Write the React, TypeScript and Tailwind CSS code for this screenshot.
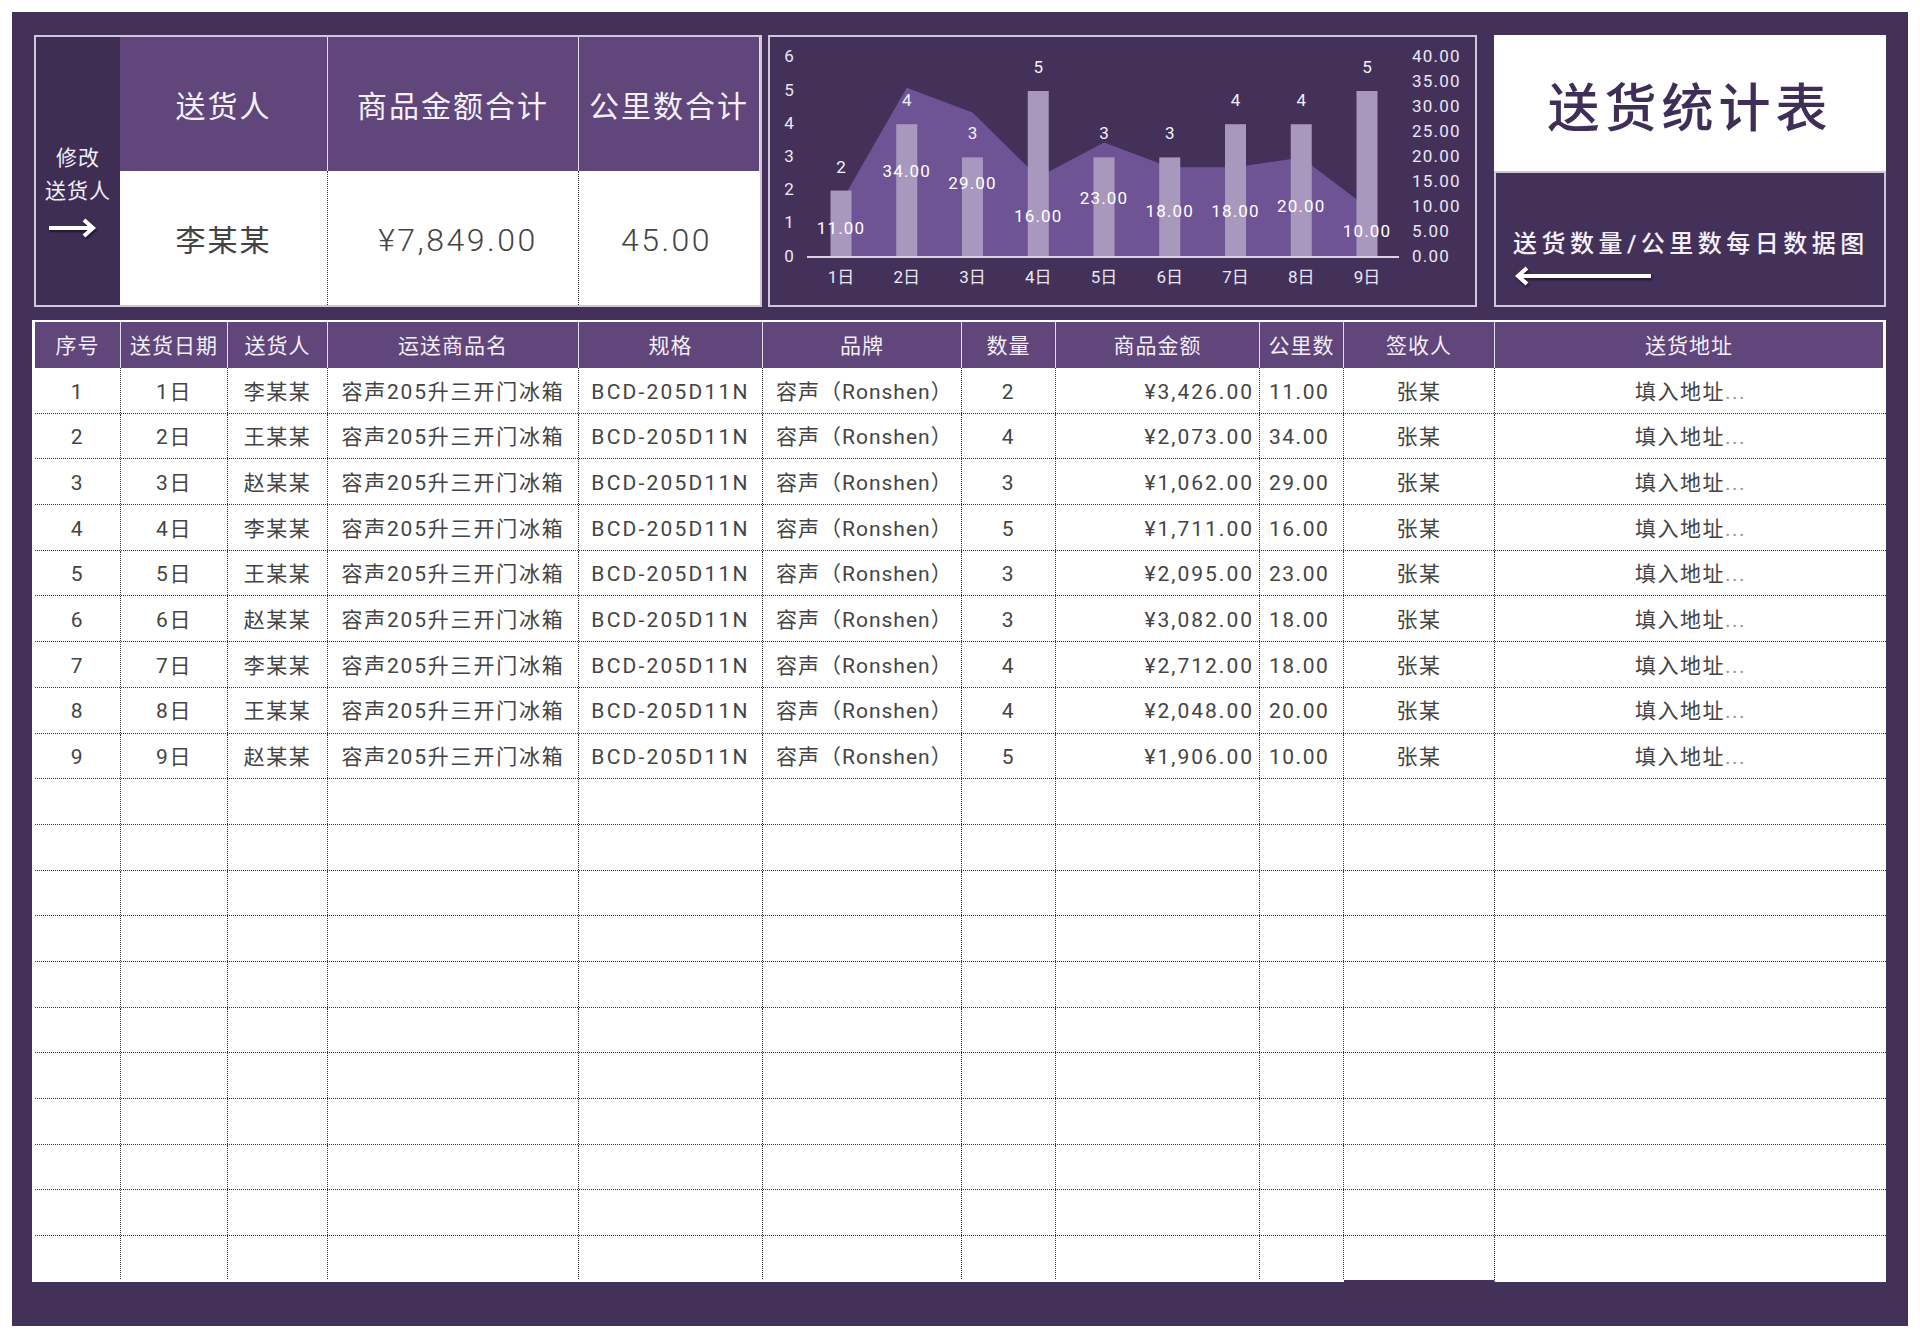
const rows = [
    ['1', '1日', '李某某', '¥3,426.00', '2', '11.00'],
    ['2', '2日', '王某某', '¥2,073.00', '4', '34.00'],
    ['3', '3日', '赵某某', '¥1,062.00', '3', '29.00'],
    ['4', '4日', '李某某', '¥1,711.00', '5', '16.00'],
    ['5', '5日', '王某某', '¥2,095.00', '3', '23.00'],
    ['6', '6日', '赵某某', '¥3,082.00', '3', '18.00'],
    ['7', '7日', '李某某', '¥2,712.00', '4', '18.00'],
    ['8', '8日', '王某某', '¥2,048.00', '4', '20.00'],
    ['9', '9日', '赵某某', '¥1,906.00', '5', '10.00'],
];

const headers = ['序号', '送货日期', '送货人', '运送商品名', '规格', '品牌', '数量', '商品金额', '公里数', '签收人', '送货地址'];
const cols = 'grid grid-cols-[86px_107px_100px_251px_184px_199px_94px_204px_84px_151px_388px]';
const cell = 'flex items-center justify-center border-r border-dotted border-[#333] pt-[4px]';

// chart coordinates are relative to the inside of the chart frame
const qty = [2, 4, 3, 5, 3, 3, 4, 4, 5];
const km = [11, 34, 29, 16, 23, 18, 18, 20, 10];
const barX = (i: number) => 71 + 65.75 * i;
const base = 220;
const qtyY = (v: number) => base - v * 33.2;
const kmY = (v: number) => base - v * 4.98;

function Chart() {
    const area = `${barX(0)},${base} ` + km.map((v, i) => `${barX(i)},${kmY(v)}`).join(' ') + ` ${barX(8)},${base}`;
    return (
        <svg viewBox="0 0 705 268" className="block h-full w-full font-['Roboto','Noto_Sans_CJK_SC',sans-serif]">
            <polygon points={area} fill="#6f5495" />
            {qty.map((v, i) => (
                <rect key={i} x={barX(i) - 10.5} y={qtyY(v)} width={21} height={base - qtyY(v)} fill="#a898be" />
            ))}
            <line x1={37} y1={base} x2={629} y2={base} stroke="#d9d2e2" strokeWidth={2} />
            {[0, 1, 2, 3, 4, 5, 6].map((v) => (
                <text key={v} x={19} y={base + 4.5 - v * 33.2} textAnchor="middle" fontSize={17} fill="#ece6f2">{v}</text>
            ))}
            {['0.00', '5.00', '10.00', '15.00', '20.00', '25.00', '30.00', '35.00', '40.00'].map((t, i) => (
                <text key={t} x={642} y={base + 4.5 - i * 24.9} fontSize={17} letterSpacing={1.2} fill="#ece6f2">{t}</text>
            ))}
            {qty.map((v, i) => (
                <text key={i} x={barX(i)} y={qtyY(v) - 18} textAnchor="middle" fontSize={17} fill="#f4f0f8">{v}</text>
            ))}
            {km.map((v, i) => (
                <text key={i} x={barX(i)} y={(base + kmY(v)) / 2 + 4.5} textAnchor="middle" fontSize={17} letterSpacing={1.2} fill="#ffffff">{v.toFixed(2)}</text>
            ))}
            {qty.map((_, i) => (
                <text key={i} x={barX(i)} y={246} textAnchor="middle" fontSize={17} fill="#ece6f2">{i + 1}日</text>
            ))}
        </svg>
    );
}

function Row({ data, last }: { data?: string[]; last?: boolean }) {
    return (
        <div className={`${cols} h-[45.7px] text-[21px] tracking-[1.5px] text-[#444] ${last ? 'pb-[3px]' : 'border-b border-dotted border-[#333]'}`}>
            <div className={cell}>{data?.[0]}</div>
            <div className={cell}>{data?.[1]}</div>
            <div className={cell}>{data?.[2]}</div>
            <div className={`${cell} tracking-[1.8px]`}>{data && '容声205升三开门冰箱'}</div>
            <div className={`${cell} tracking-[2.2px]`}>{data && 'BCD-205D11N'}</div>
            <div className={`${cell} !justify-start pl-[13px] tracking-[1px]`}>{data && '容声（Ronshen）'}</div>
            <div className={cell}>{data?.[4]}</div>
            <div className={`${cell} !justify-end pr-[5px] tracking-[2px]`}>{data?.[3]}</div>
            <div className={`${cell} !justify-start pl-[9px]`}>{data?.[5]}</div>
            <div className={`${cell} ${last ? 'mb-[-3px] border-b-2 border-b-[#43315a] [border-bottom-style:solid]' : ''}`}>{data && '张某'}</div>
            <div className="flex items-center justify-center pl-[3px] pt-[4px]">
                {data && <>填入地址<span className="text-[#999]">...</span></>}
            </div>
        </div>
    );
}

export default function App() {
    return (
        <div className="h-[1338px] w-[1920px] bg-white pl-[12px] pt-[12px] font-['Roboto','Noto_Sans_CJK_SC',sans-serif]">
            <div className="h-[1314px] w-[1896px] bg-[#43315a] pl-[20px] pt-[23px]">
                <div className="flex h-[272px] pl-[2px]">
                    <div className="grid w-[728px] grid-cols-[84px_208px_251px_181px] grid-rows-[134px_1fr] border-2 border-[#cfc8d8]">
                        <div className="row-span-2 flex flex-col items-center justify-center bg-[#3e2e54] pt-[37px] text-[21px] leading-[33px] tracking-[1px] text-[#f2edf6]">
                            <span>修改</span>
                            <span>送货人</span>
                            <svg viewBox="0 0 48 20" className="mr-[12px] mt-[10px] h-[20px] w-[48px] drop-shadow-[1px_2px_1px_rgba(0,0,0,0.5)]" fill="none" stroke="#fff" strokeWidth={4}>
                                <path d="M1 10H45M36 2l9 8-9 8" />
                            </svg>
                        </div>
                        {['送货人', '商品金额合计', '公里数合计'].map((t) => (
                            <div key={t} className="flex items-center justify-center border-r border-[#e4deeb] bg-[#60467a] pt-[4px] text-[30px] tracking-[2px] text-[#f5f0f8] last:border-r-0">{t}</div>
                        ))}
                        <div className="flex items-center justify-center border-r border-dotted border-[#333] bg-white pt-[4px] text-[30px] tracking-[2px] text-[#444]">李某某</div>
                        <div className="flex items-center justify-center border-r border-dotted border-[#333] bg-white pl-[10px] pt-[4px] text-[32px] font-light tracking-[2.5px] text-[#444]">¥7,849.00</div>
                        <div className="flex items-center justify-center bg-white pr-[6px] pt-[4px] text-[32px] font-light tracking-[2.5px] text-[#444]">45.00</div>
                    </div>
                    <div className="ml-[6px] w-[709px] border-2 border-[#cfc8d8]">
                        <Chart />
                    </div>
                    <div className="ml-[17px] flex w-[392px] flex-col">
                        <div className="flex h-[136px] items-center justify-center bg-white pt-[14px] text-[52px] font-medium tracking-[5px] text-[#3f2f58]">送货统计表</div>
                        <div className="flex flex-1 flex-col justify-center border-2 border-[#cfc8d8] pl-[17px] pt-[35px] text-[#f5f0f8]">
                            <span className="text-[24px] font-medium leading-[32px] tracking-[4.5px] whitespace-nowrap">送货数量/公里数每日数据图</span>
                            <svg viewBox="0 0 136 20" className="ml-[2px] mt-[6px] h-[20px] w-[136px] drop-shadow-[1px_2px_1px_rgba(0,0,0,0.5)]" fill="none" stroke="#fff" strokeWidth={4}>
                                <path d="M136 10H3M12 2l-9 8 9 8" />
                            </svg>
                        </div>
                    </div>
                </div>
                <div className="mt-[13px] w-[1854px] bg-white pl-[3px] pt-[2px]">
                    <div className={`${cols} h-[46px] text-[21px] tracking-[1px] text-[#f2edf6]`}>
                        {headers.map((h) => (
                            <div key={h} className="flex items-center justify-center border-r border-[#e4deeb] bg-[#60467a] pt-[4px] last:border-r-0">{h}</div>
                        ))}
                    </div>
                    {Array.from({ length: 20 }).map((_, i) => (
                        <Row key={i} data={rows[i]} last={i === 19} />
                    ))}
                </div>
            </div>
        </div>
    );
}
